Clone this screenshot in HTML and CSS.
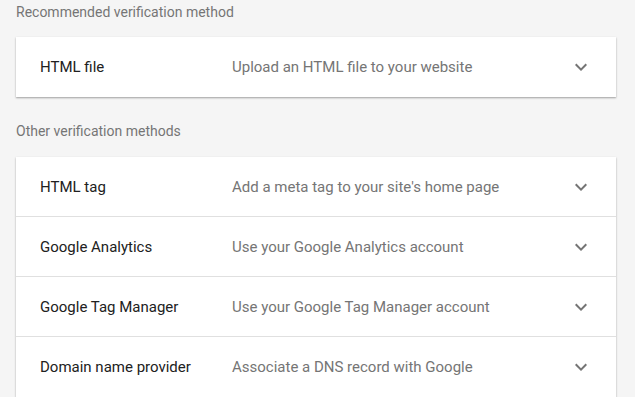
FILE: index.html
```html
<!DOCTYPE html>
<html>
<head>
<meta charset="utf-8">
<link rel="stylesheet" href="styles.css">
</head>
<body>
<div class="page">
  <div class="label first">Recommended verification method</div>
  <div class="card">
    <div class="row">
      <div class="name">HTML file</div>
      <div class="desc">Upload an HTML file to your website</div>
      <svg class="chev" viewBox="0 0 24 24"><path d="M16.59 8.59L12 13.17 7.41 8.59 6 10l6 6 6-6z"/></svg>
    </div>
  </div>
  <div class="label">Other verification methods</div>
  <div class="card">
    <div class="row">
      <div class="name">HTML tag</div>
      <div class="desc">Add a meta tag to your site's home page</div>
      <svg class="chev" viewBox="0 0 24 24"><path d="M16.59 8.59L12 13.17 7.41 8.59 6 10l6 6 6-6z"/></svg>
    </div>
    <div class="row">
      <div class="name">Google Analytics</div>
      <div class="desc">Use your Google Analytics account</div>
      <svg class="chev" viewBox="0 0 24 24"><path d="M16.59 8.59L12 13.17 7.41 8.59 6 10l6 6 6-6z"/></svg>
    </div>
    <div class="row">
      <div class="name">Google Tag Manager</div>
      <div class="desc">Use your Google Tag Manager account</div>
      <svg class="chev" viewBox="0 0 24 24"><path d="M16.59 8.59L12 13.17 7.41 8.59 6 10l6 6 6-6z"/></svg>
    </div>
    <div class="row">
      <div class="name">Domain name provider</div>
      <div class="desc">Associate a DNS record with Google</div>
      <svg class="chev" viewBox="0 0 24 24"><path d="M16.59 8.59L12 13.17 7.41 8.59 6 10l6 6 6-6z"/></svg>
    </div>
  </div>
</div>
</body>
</html>
```
FILE: styles.css
```css
html, body {
  margin: 0;
  padding: 0;
  background: #f5f5f5;
  font-family: Roboto, "Liberation Sans", sans-serif;
  overflow: hidden;
}
.page {
  width: 600px;
  padding: 0 19px 0 16px;
}
.label {
  font-size: 14px;
  line-height: 24px;
  color: #757575;
  margin: 22px 0 14px;
}
.label.first {
  margin-top: 0;
  margin-bottom: 13px;
}
.card {
  background: #fff;
  box-shadow: 0 1px 2px rgba(0,0,0,0.3), 0 1px 1px rgba(0,0,0,0.06);
}
.row {
  display: flex;
  align-items: center;
  height: 60px;
  padding: 0 24px;
  border-bottom: 1px solid #e0e0e0;
  box-sizing: border-box;
}
.row:last-child {
  border-bottom: none;
}
.name {
  width: 192px;
  font-size: 15px;
  color: #212121;
}
.desc {
  flex: 1;
  font-size: 15px;
  color: #757575;
}
.chev {
  width: 24px;
  height: 24px;
  fill: #757575;
  margin-right: -1px;
}
```
